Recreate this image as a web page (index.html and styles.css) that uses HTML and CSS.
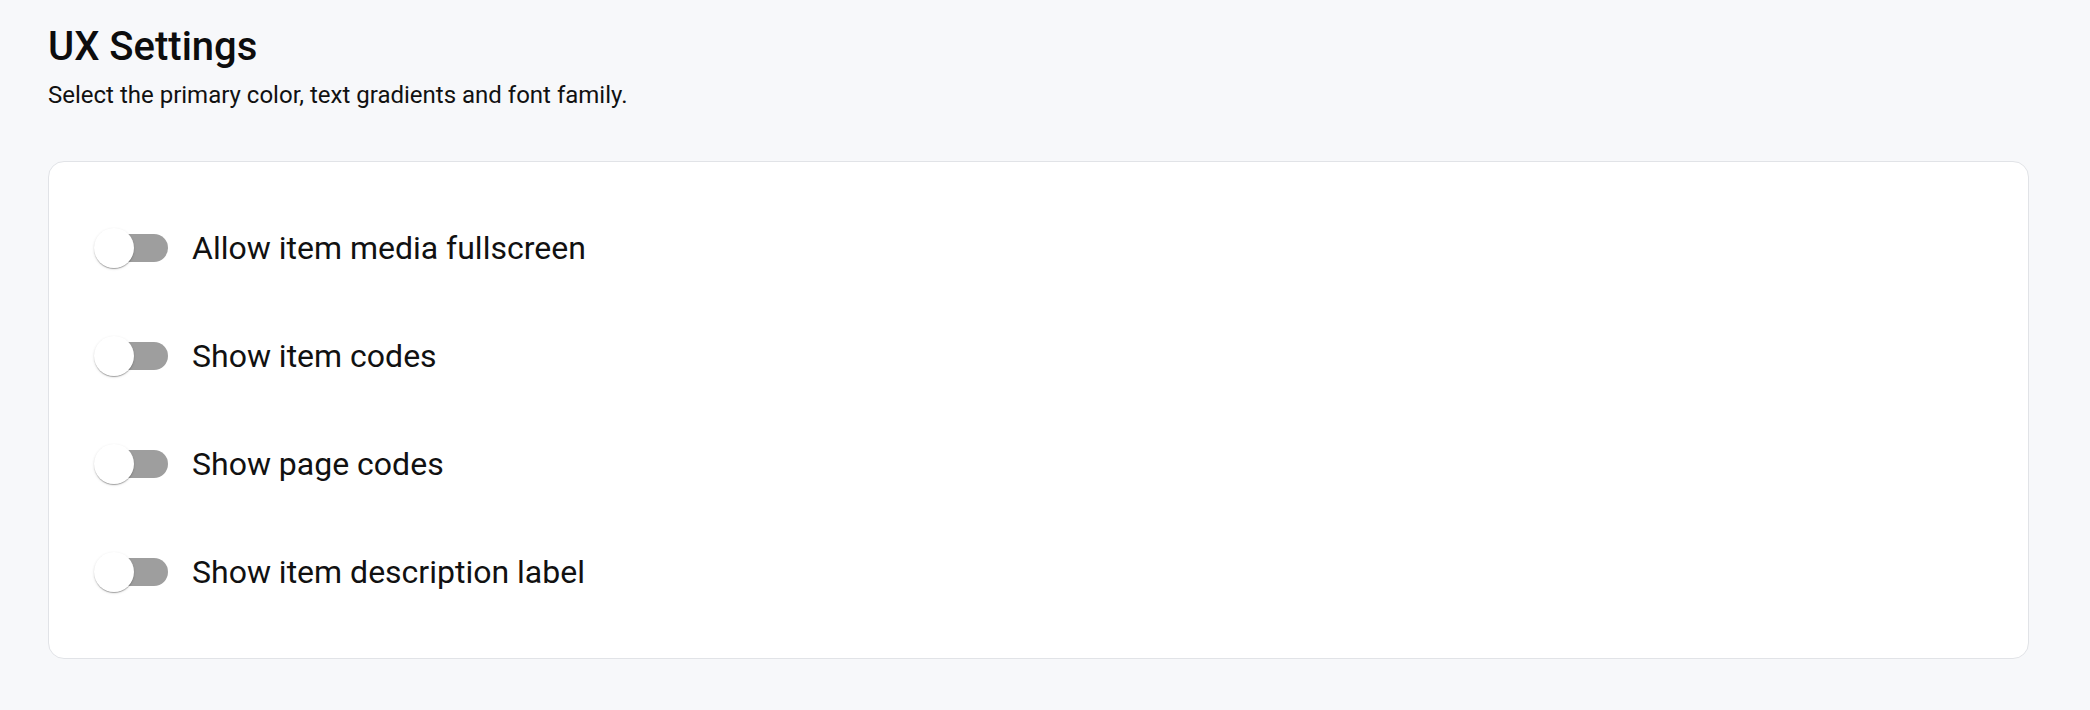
FILE: index.html
```html
<!DOCTYPE html>
<html lang="en">
<head>
<meta charset="utf-8">
<title>UX Settings</title>
<link rel="stylesheet" href="styles.css">
</head>
<body>
<main class="page">
  <header class="page-header">
    <h1 class="title">UX Settings</h1>
    <p class="subtitle">Select the primary color, text gradients and font family.</p>
  </header>
  <section class="card">
    <label class="row">
      <span class="switch"><span class="track"></span><span class="thumb"></span></span>
      <span class="label">Allow item media fullscreen</span>
    </label>
    <label class="row">
      <span class="switch"><span class="track"></span><span class="thumb"></span></span>
      <span class="label">Show item codes</span>
    </label>
    <label class="row">
      <span class="switch"><span class="track"></span><span class="thumb"></span></span>
      <span class="label">Show page codes</span>
    </label>
    <label class="row">
      <span class="switch"><span class="track"></span><span class="thumb"></span></span>
      <span class="label">Show item description label</span>
    </label>
  </section>
</main>
</body>
</html>
```

FILE: styles.css
```css
html, body {
  margin: 0;
  padding: 0;
  background: #f7f8fa;
  font-family: Roboto, "Liberation Sans", Arial, sans-serif;
  color: #111;
}

.page {
  padding: 24px 61px 0 48px;
}

.title {
  margin: 0;
  font-size: 40px;
  font-weight: 500;
  line-height: 46px;
  color: #0d0d0d;
}

.subtitle {
  margin: 10px 0 0;
  font-size: 24px;
  line-height: 30px;
  color: #111;
}

.card {
  margin-top: 51px;
  background: #fff;
  border: 1px solid #e1e3e7;
  border-radius: 16px;
  padding: 32px 45px;
  display: flex;
  flex-direction: column;
}

.row {
  height: 108px;
  display: flex;
  align-items: center;
  gap: 24px;
  cursor: pointer;
}

.switch {
  position: relative;
  width: 74px;
  height: 40px;
  flex: none;
}

.track {
  position: absolute;
  left: 6px;
  top: 6px;
  width: 68px;
  height: 28px;
  border-radius: 14px;
  background: #9e9e9e;
}

.thumb {
  position: absolute;
  left: 0;
  top: 0;
  width: 40px;
  height: 40px;
  border-radius: 50%;
  background: #fff;
  box-shadow: 0 2px 1px -1px rgba(0,0,0,0.2), 0 1px 1px 0 rgba(0,0,0,0.14), 0 1px 3px 0 rgba(0,0,0,0.12);
}

.label {
  font-size: 32px;
  line-height: 40px;
  color: #111;
}
```
